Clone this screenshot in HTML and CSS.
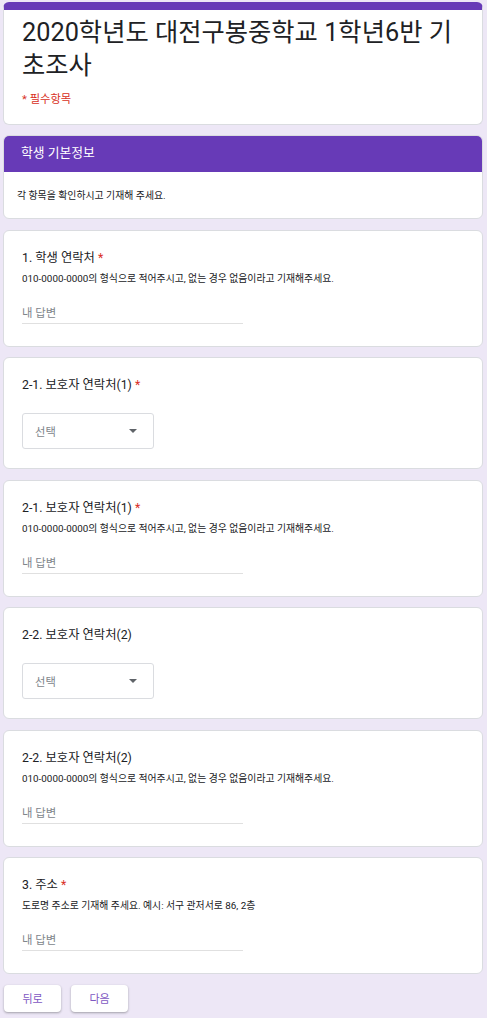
FILE: index.html
```html
<!DOCTYPE html>
<html lang="ko">
<head>
<meta charset="utf-8">
<title>2020학년도 대전구봉중학교 1학년6반 기초조사</title>
<link rel="stylesheet" href="styles.css">
</head>
<body>
<div class="page">
  <div class="card header-card">
    <h1 class="form-title">2020학년도 대전구봉중학교 1학년6반 기초조사</h1>
    <div class="required-note">* 필수항목</div>
  </div>

  <div class="card section-card">
    <div class="section-head">학생 기본정보</div>
    <div class="section-body">각 항목을 확인하시고 기재해 주세요.</div>
  </div>

  <div class="card q-card">
    <div class="q-title">1. 학생 연락처 <span class="star">*</span></div>
    <div class="q-desc">010-0000-0000의 형식으로 적어주시고, 없는 경우 없음이라고 기재해주세요.</div>
    <div class="answer">내 답변</div>
  </div>

  <div class="card q-card select-card">
    <div class="q-title">2-1. 보호자 연락처(1) <span class="star">*</span></div>
    <div class="select"><span>선택</span><span class="arrow"></span></div>
  </div>

  <div class="card q-card">
    <div class="q-title">2-1. 보호자 연락처(1) <span class="star">*</span></div>
    <div class="q-desc">010-0000-0000의 형식으로 적어주시고, 없는 경우 없음이라고 기재해주세요.</div>
    <div class="answer">내 답변</div>
  </div>

  <div class="card q-card select-card">
    <div class="q-title">2-2. 보호자 연락처(2)</div>
    <div class="select"><span>선택</span><span class="arrow"></span></div>
  </div>

  <div class="card q-card">
    <div class="q-title">2-2. 보호자 연락처(2)</div>
    <div class="q-desc">010-0000-0000의 형식으로 적어주시고, 없는 경우 없음이라고 기재해주세요.</div>
    <div class="answer">내 답변</div>
  </div>

  <div class="card q-card">
    <div class="q-title">3. 주소 <span class="star">*</span></div>
    <div class="q-desc">도로명 주소로 기재해 주세요. 예시: 서구 관저서로 86, 2층</div>
    <div class="answer">내 답변</div>
  </div>

  <div class="nav">
    <button class="nav-btn">뒤로</button>
    <button class="nav-btn">다음</button>
  </div>
</div>
</body>
</html>
```

FILE: styles.css
```css
html, body {
  margin: 0;
  padding: 0;
  background: #ede7f6;
}

body {
  font-family: Roboto, "Noto Sans CJK KR", sans-serif;
  color: #202124;
}

.page {
  width: 480px;
  padding: 2px 4px 8px 3px;
  display: flex;
  flex-direction: column;
  gap: 10.5px;
}

.card {
  box-sizing: border-box;
  background: #fff;
  border: 1px solid #dadce0;
  border-radius: 6px;
}

.header-card {
  border-top: 8px solid #673ab7;
  padding: 7px 18px 17px 18px;
}

.form-title {
  margin: 0;
  font-size: 25.3px;
  font-weight: 400;
  line-height: 32.5px;
  color: #202124;
}

.required-note {
  margin-top: 9.5px;
  font-size: 11.3px;
  line-height: 15px;
  color: #d93025;
}

.section-card {
  overflow: hidden;
  height: 84px;
}

.section-head {
  background: #673ab7;
  color: #fff;
  height: 36px;
  line-height: 34px;
  padding-left: 17px;
  font-size: 12.8px;
}

.section-body {
  padding: 17px 13px 0 13px;
  font-size: 9.9px;
  line-height: 14px;
}

.q-card {
  padding: 18px 18px 22px 18px;
  height: 117px;
}

.select-card {
  height: 112px;
}

.q-title {
  font-size: 12.3px;
  line-height: 18px;
}

.star {
  color: #d93025;
}

.q-desc {
  margin-top: 5px;
  font-size: 9.85px;
  line-height: 14px;
}

.answer {
  margin-top: 16px;
  width: 221px;
  height: 22px;
  line-height: 22px;
  box-sizing: border-box;
  border-bottom: 1px solid #e0e0e0;
  font-size: 11.4px;
  color: #80868b;
}

.select {
  margin-top: 19px;
  width: 132px;
  height: 36px;
  box-sizing: border-box;
  border: 1px solid #dadce0;
  border-radius: 3px;
  display: flex;
  align-items: center;
  justify-content: space-between;
  padding: 0 16px 0 12px;
  font-size: 11.3px;
  color: #80868b;
}

.arrow {
  width: 0;
  height: 0;
  border-left: 4px solid transparent;
  border-right: 4px solid transparent;
  border-top: 4px solid #5f6368;
}

.nav {
  display: flex;
  gap: 10px;
  padding-left: 1px;
}

.nav-btn {
  width: 57px;
  height: 27px;
  border: none;
  border-radius: 4px;
  background: #fff;
  box-shadow: 0 1px 2px rgba(60, 64, 67, 0.3), 0 1px 3px rgba(60, 64, 67, 0.15);
  font-family: Roboto, "Noto Sans CJK KR", sans-serif;
  font-size: 11px;
  color: #7e57c2;
  padding: 0;
}
```
